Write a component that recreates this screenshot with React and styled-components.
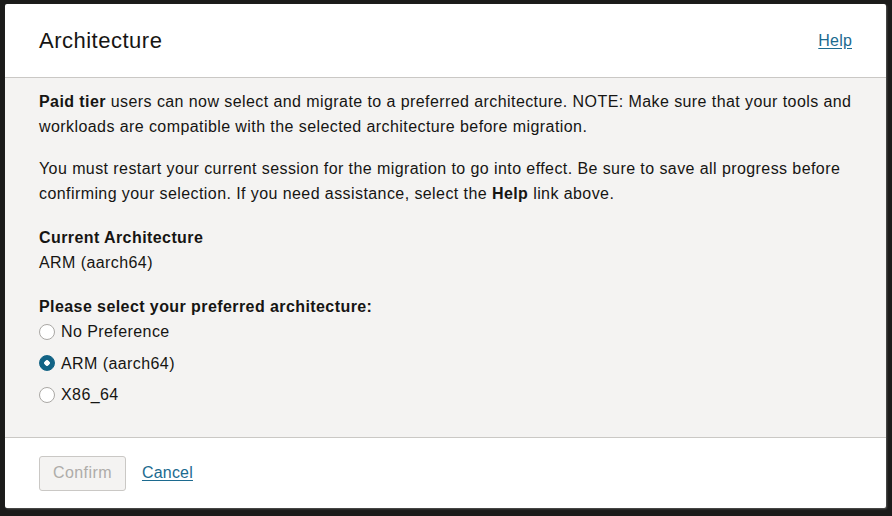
import React, { useState } from "react";
import styled, { createGlobalStyle, css } from "styled-components";

const GlobalStyle = createGlobalStyle`
  html, body {
    margin: 0;
    padding: 0;
    background: #1b1b1a;
  }
  body {
    font-family: "Liberation Sans", Arial, sans-serif;
    color: #161513;
    letter-spacing: 0.42px;
  }
`;

const options = ["No Preference", "ARM (aarch64)", "X86_64"];

const App = () => {
  const [choice, setChoice] = useState(1);
  return (
    <>
      <GlobalStyle />
      <Screen>
        <Dialog>
          <Header>
            <Title>Architecture</Title>
            <Link href="#">Help</Link>
          </Header>
          <Body>
            <Para>
              <b>Paid tier</b> users can now select and migrate to a preferred
              architecture. NOTE: Make sure that your tools and workloads are
              compatible with the selected architecture before migration.
            </Para>
            <Para>
              You must restart your current session for the migration to go
              into effect. Be sure to save all progress before confirming your
              selection. If you need assistance, select the <b>Help</b> link
              above.
            </Para>
            <Label>Current Architecture</Label>
            <Value>ARM (aarch64)</Value>
            <Label>Please select your preferred architecture:</Label>
            <RadioList>
              {options.map((opt, i) => (
                <RadioRow key={opt} first={i === 0} onClick={() => setChoice(i)}>
                  <Radio checked={choice === i} />
                  <span>{opt}</span>
                </RadioRow>
              ))}
            </RadioList>
          </Body>
          <Footer>
            <Button disabled>Confirm</Button>
            <Link href="#">Cancel</Link>
          </Footer>
        </Dialog>
      </Screen>
    </>
  );
};

export default App;

const Screen = styled.div`
  width: 892px;
  height: 516px;
  padding: 4px 6px 8px 5px;
  box-sizing: border-box;
`;

const Dialog = styled.div`
  width: 881px;
  height: 504px;
  display: flex;
  flex-direction: column;
  background: #fff;
  border-radius: 2px;
  box-shadow: 1px 1px 2px rgba(255, 255, 255, 0.25);
  overflow: hidden;
`;

const Header = styled.div`
  height: 73px;
  flex-shrink: 0;
  display: flex;
  align-items: center;
  justify-content: space-between;
  padding: 0 34px;
  border-bottom: 1px solid #cac8c5;
`;

const Title = styled.h1`
  margin: 0;
  font-size: 22px;
  font-weight: 400;
  letter-spacing: 0.5px;
  color: #161513;
`;

const Link = styled.a`
  font-size: 16px;
  letter-spacing: 0.2px;
  color: #1c6a8f;
  text-decoration: underline;
  text-underline-offset: 2px;
`;

const Body = styled.div`
  flex: 1;
  background: #f4f3f2;
  padding: 11px 34px 0;
  font-size: 16px;
  line-height: 25px;
  border-bottom: 1px solid #cac8c5;
`;

const Para = styled.p`
  margin: 0 0 17px;
  b {
    font-weight: 700;
  }
`;

const Label = styled.div`
  font-weight: 700;
  margin-top: 19px;
`;

const Value = styled.div``;

const RadioList = styled.div`
  display: flex;
  flex-direction: column;
`;

const RadioRow = styled.label`
  display: flex;
  align-items: center;
  gap: 6px;
  margin-top: ${p => (p.first ? "0" : "6.5px")};
  cursor: pointer;
`;

const Radio = styled.span`
  width: 16px;
  height: 16px;
  box-sizing: border-box;
  border-radius: 50%;
  background: #fff;
  border: 1px solid #aaa8a5;
  ${p =>
    p.checked &&
    css`
      border-color: #126385;
      background: radial-gradient(circle, #fff 0 2.5px, #126385 3px);
    `}
`;

const Footer = styled.div`
  height: 70px;
  flex-shrink: 0;
  display: flex;
  align-items: center;
  gap: 16px;
  padding: 0 34px;
`;

const Button = styled.button`
  height: 35px;
  padding: 0 13px;
  font-family: inherit;
  font-size: 16px;
  letter-spacing: 0.42px;
  color: #aeaca9;
  background: #f4f3f2;
  border: 1px solid #cac8c5;
  border-radius: 3px;
`;
